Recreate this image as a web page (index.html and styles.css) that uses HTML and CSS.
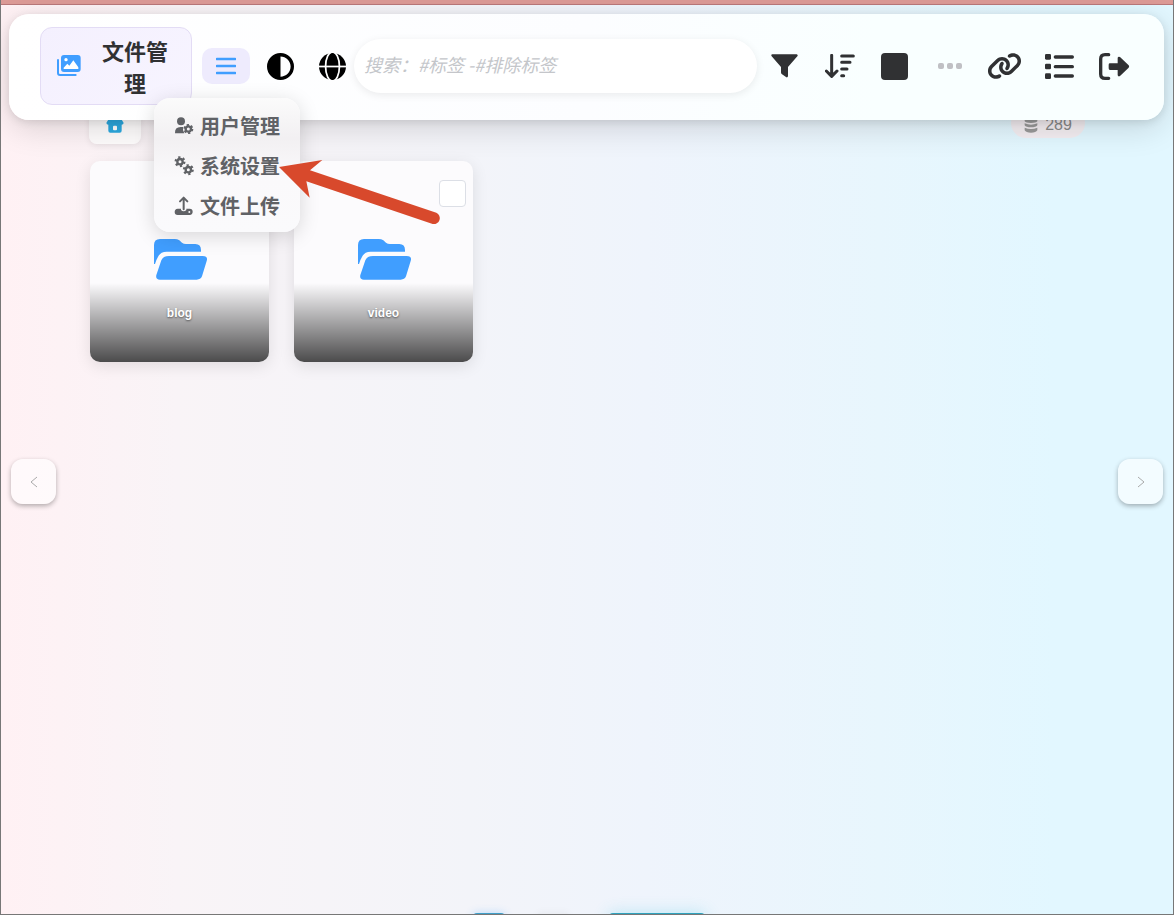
FILE: index.html
```
<!DOCTYPE html>
<html lang="zh-CN">
<head>
    <meta charset="UTF-8">
    <meta name="viewport" content="width=device-width, initial-scale=1.0">
    <title>文件管理</title>
    <link rel="stylesheet" href="styles.css">
</head>
<body>
    <div class="page">
        <header class="navbar">
            <button class="brand">
                <svg width="24" height="22" viewBox="0 0 72 66">
                    <path d="M3 15V54Q3 60 9 60H56" fill="none" stroke="#409eff" stroke-width="6" stroke-linecap="round"/>
                    <rect x="12" y="0" width="59" height="51" rx="9" fill="#409eff"/>
                    <circle cx="27" cy="14" r="5" fill="#fff"/>
                    <path d="M20 42V38L31 26L37 32L49 16L64 37V42Z" fill="#fff"/>
                </svg>
                <span class="brand-text">文件管理</span>
            </button>
            <div class="nav-left">
                <div class="menu-wrap">
                    <button class="menu-btn" aria-label="菜单">
                        <svg width="20" height="18" viewBox="0 0 20 18"><path d="M1 2H19M1 9H19M1 16H19" stroke="#409eff" stroke-width="2.6" stroke-linecap="round"/></svg>
                    </button>
                    <nav class="dropdown">
                        <a href="#">
                            <svg width="20" height="18" viewBox="0 0 60 54">
                                <circle cx="21" cy="13" r="12"/>
                                <path d="M3 49Q2 30 20 30H27Q25 40 31 49Z"/>
                                <circle cx="43" cy="36" r="8" fill="none" stroke="#606266" stroke-width="7"/>
                                <circle cx="43" cy="36" r="12" fill="none" stroke="#606266" stroke-width="6" stroke-dasharray="6.5 6.1"/>
                            </svg>
                            用户管理
                        </a>
                        <a href="#">
                            <svg width="20" height="20" viewBox="0 0 60 60">
                                <g fill="none" stroke="#606266">
                                    <circle cx="18" cy="17" r="8" stroke-width="7"/>
                                    <circle cx="18" cy="17" r="13" stroke-width="7" stroke-dasharray="6.5 7.1"/>
                                    <circle cx="43" cy="41" r="8" stroke-width="7"/>
                                    <circle cx="43" cy="41" r="13" stroke-width="7" stroke-dasharray="6.5 7.1"/>
                                </g>
                            </svg>
                            系统设置
                        </a>
                        <a href="#">
                            <svg width="20" height="20" viewBox="0 0 60 60">
                                <path d="M29 40V6M18 16L29 5L40 16" fill="none" stroke="#606266" stroke-width="6" stroke-linecap="round" stroke-linejoin="round"/>
                                <path d="M11 38H21V42Q29 50 37 42V38H47Q56 38 56 47T47 57H11Q2 57 2 48T11 38Z"/>
                                <circle cx="46" cy="48" r="3" fill="#f7f6f9"/>
                            </svg>
                            文件上传
                        </a>
                    </nav>
                </div>
                <button class="icon-btn" aria-label="主题">
                    <svg width="27" height="27" viewBox="0 0 512 512"><path d="M448 256c0-106-86-192-192-192V448c106 0 192-86 192-192zM0 256a256 256 0 1 1 512 0A256 256 0 1 1 0 256z"/></svg>
                </button>
                <button class="icon-btn" aria-label="语言">
                    <svg width="27" height="27" viewBox="0 0 78 78">
                        <circle cx="39" cy="39" r="39"/>
                        <g fill="none" stroke="#fff" stroke-width="5">
                            <ellipse cx="39" cy="39" rx="20" ry="42"/>
                            <path d="M0 39H78"/>
                        </g>
                    </svg>
                </button>
            </div>
            <input class="search" type="search" placeholder="搜索：#标签 -#排除标签" aria-label="搜索">
            <div class="tools">
                <button aria-label="筛选">
                    <svg width="27" height="24" viewBox="0 0 81 72"><path d="M4 1H77Q82 3 79 7L51 39V67Q49 72 45 69L32 60Q30 58 30 55V39L2 7Q-1 2 4 1Z"/></svg>
                </button>
                <button aria-label="排序">
                    <svg width="30" height="24" viewBox="0 0 90 72"><path d="M20 4V66M4 51L20 67L36 51M50 6H85M50 25H75M50 45H66M50 65H56" fill="none" stroke="#303133" stroke-width="9" stroke-linecap="round" stroke-linejoin="round"/></svg>
                </button>
                <button aria-label="全选">
                    <svg width="27" height="27" viewBox="0 0 27 27"><rect width="27" height="27" rx="4"/></svg>
                </button>
                <button aria-label="更多" disabled>
                    <svg width="24" height="6" viewBox="0 0 24 6" class="dim"><rect width="6" height="6" rx="2"/><rect x="9" width="6" height="6" rx="2"/><rect x="18" width="6" height="6" rx="2"/></svg>
                </button>
                <button aria-label="链接">
                    <svg width="35" height="28" viewBox="0 0 640 512"><path d="M579.8 267.7c56.5-56.5 56.5-148 0-204.5c-50-50-128.8-56.5-186.3-15.4l-1.6 1.1c-14.4 10.3-17.7 30.3-7.4 44.6s30.3 17.7 44.6 7.4l1.6-1.1c32.1-22.9 76-19.3 103.8 8.6c31.5 31.5 31.5 82.5 0 114L422.3 334.8c-31.5 31.5-82.5 31.5-114 0c-27.9-27.9-31.5-71.8-8.6-103.8l1.1-1.6c10.3-14.4 6.9-34.4-7.4-44.6s-34.4-6.9-44.6 7.4l-1.1 1.6C206.5 251.2 213 330 263 380c56.5 56.5 148 56.5 204.5 0L579.8 267.7zM60.2 244.3c-56.5 56.5-56.5 148 0 204.5c50 50 128.8 56.5 186.3 15.4l1.6-1.1c14.4-10.3 17.7-30.3 7.4-44.6s-30.3-17.7-44.6-7.4l-1.6 1.1c-32.1 22.9-76 19.3-103.8-8.6C74 372 74 321 105.5 289.5L217.7 177.2c31.5-31.5 82.5-31.5 114 0c27.9 27.9 31.5 71.8 8.6 103.9l-1.1 1.6c-10.3 14.4-6.9 34.4 7.4 44.6s34.4 6.9 44.6-7.4l1.1-1.6C433.5 260.8 427 182 377 132c-56.5-56.5-148-56.5-204.5 0L60.2 244.3z"/></svg>
                </button>
                <button aria-label="列表">
                    <svg width="29" height="25" viewBox="0 0 87 75"><rect width="18" height="17" rx="4"/><rect y="29" width="18" height="17" rx="4"/><rect y="58" width="18" height="17" rx="4"/><path d="M31 9H82M31 38H82M31 66H82" stroke="#303133" stroke-width="10" stroke-linecap="round"/></svg>
                </button>
                <button aria-label="退出">
                    <svg width="31" height="27" viewBox="0 0 93 81"><path d="M29 5H18Q5 5 5 18V63Q5 76 18 76H29" fill="none" stroke="#303133" stroke-width="10" stroke-linecap="round"/><path d="M33 31H56V14Q58 9 63 12L89 37Q92 40 89 44L63 69Q58 72 56 67V51H33Q29 51 29 46V35Q29 31 33 31Z"/></svg>
                </button>
            </div>
        </header>

        <main class="content">
            <div class="crumbs">
                <a class="home" href="#" aria-label="首页">
                    <svg width="18" height="14" viewBox="0 0 54 42"><path d="M8 0H46L53 12Q52 17 47 17V35Q47 41 41 41H13Q7 41 7 35V17Q2 17 1 12Z" fill="#2ba9e0"/><rect x="21" y="20" width="12" height="14" rx="3" fill="#fff"/></svg>
                </a>
                <span class="count">
                    <svg width="14" height="15" viewBox="0 0 42 45"><path d="M2 6Q4 0 21 0T40 6V10Q36 15 21 15T2 10ZM2 16Q21 24 40 16V22Q36 28 21 28T2 22ZM2 29Q21 37 40 29V37Q36 44 21 44T2 37Z" fill="#999"/></svg>
                    289
                </span>
            </div>
            <div class="grid">
                <div class="card">
                    <input type="checkbox" aria-label="选择 blog">
                    <svg class="folder" width="54" height="41" viewBox="0 0 162 123"><path d="M0 75V18Q0 0 18 0H62Q70 0 76 4L84 11Q89 15 96 15H124Q141 15 141 33V38H38Q20 38 13 52Q7 62 3 75ZM45 51H146Q163 51 158 66L144 112Q140 122 128 122H18Q4 122 7 108L22 64Q27 51 45 51Z"/></svg>
                    <div class="name">blog</div>
                </div>
                <div class="card">
                    <input type="checkbox" aria-label="选择 video">
                    <svg class="folder" width="54" height="41" viewBox="0 0 162 123"><path d="M0 75V18Q0 0 18 0H62Q70 0 76 4L84 11Q89 15 96 15H124Q141 15 141 33V38H38Q20 38 13 52Q7 62 3 75ZM45 51H146Q163 51 158 66L144 112Q140 122 128 122H18Q4 122 7 108L22 64Q27 51 45 51Z"/></svg>
                    <div class="name">video</div>
                </div>
            </div>
        </main>

        <button class="side prev" aria-label="上一页"><svg width="8" height="12" viewBox="0 0 8 12"><path d="M7 1L1 6L7 11"/></svg></button>
        <button class="side next" aria-label="下一页"><svg width="8" height="12" viewBox="0 0 8 12"><path d="M1 1L7 6L1 11"/></svg></button>

        <footer class="pager">
            <button class="pg current" aria-label="当前页"></button>
            <button class="pg" aria-label="末页"></button>
            <button class="pg jump" aria-label="跳转"></button>
        </footer>

        <svg class="pointer" width="162" height="68" viewBox="0 0 486 204">
            <path d="M0 51L130 30L93 61L472 188A18 18 0 0 1 461 222L82 94L92 143Z" transform="translate(0 -18)" fill="#d8492c"/>
        </svg>
    </div>
</body>
</html>
```
FILE: styles.css
```
* {
    box-sizing: border-box;
}
body {
    margin: 0;
    font-family: "Noto Sans CJK SC", "Liberation Sans", sans-serif;
    color: #303133;
}
button {
    padding: 0;
    border: none;
    background: none;
    font-family: inherit;
    color: inherit;
    cursor: pointer;
}
svg {
    display: block;
    flex-shrink: 0;
}
.page {
    position: relative;
    display: flex;
    flex-direction: column;
    height: 100vh;
    min-height: 400px;
    overflow: hidden;
    border: 1px solid #777;
    border-top: 0;
    background: linear-gradient(to right, #fff1f4, #f9f4f7 15%, #f3f4f9 40%, #eff4fc 55%, #e8f6fd 75%, #e2f7ff 90%);
}
.page::before {
    content: "";
    flex: 0 0 4px;
    background: #dc9a96;
    border-bottom: 1px solid #b97779;
}

/* 顶部导航 */
.navbar {
    position: relative;
    z-index: 10;
    display: flex;
    align-items: center;
    min-height: 106px;
    margin: 9px 9px 0 8px;
    padding: 13px 22px 15px 31px;
    border-radius: 20px;
    background: linear-gradient(to right, #fff, #fcfdff 50%, #f9ffff 75%);
    box-shadow: 0 8px 32px rgba(0, 0, 0, 0.14), 0 2px 8px rgba(0, 0, 0, 0.1);
}
.brand {
    display: flex;
    align-items: center;
    width: 152px;
    height: 78px;
    padding: 0 16px;
    border: 1px solid #e3dcf5;
    border-radius: 12px;
    background: linear-gradient(135deg, #f4f0fe, #f7f4ff);
}
.brand-text {
    flex: 1;
    padding-left: 14px;
    font-size: 22px;
    line-height: 32px;
    font-weight: 700;
}
.nav-left {
    display: flex;
    align-items: center;
    gap: 8px;
    margin-left: 10px;
}
.menu-wrap {
    position: relative;
}
.menu-btn {
    display: flex;
    align-items: center;
    justify-content: center;
    width: 48px;
    height: 36px;
    border-radius: 10px;
    background: #eeebfd;
}
.icon-btn {
    display: flex;
    justify-content: center;
    width: 44px;
}
.dropdown {
    position: absolute;
    top: 50px;
    right: -50px;
    width: 146px;
    padding: 8px 0 6px;
    border-radius: 16px;
    background: linear-gradient(#fbfbfb, #f2f0f2 30%, #faf9fb 60%, #fafafc);
    box-shadow: 0 4px 20px rgba(0, 0, 0, 0.15);
}
.dropdown a {
    display: flex;
    align-items: center;
    justify-content: center;
    gap: 6px;
    height: 40px;
    font-size: 20px;
    line-height: 40px;
    font-weight: 700;
    color: #606266;
    text-decoration: none;
}
.dropdown svg {
    fill: #606266;
}
.search {
    flex: 1;
    min-width: 0;
    height: 54px;
    padding: 0 10px 4px;
    border: none;
    border-radius: 27px;
    background: #fff;
    font-family: inherit;
    font-size: 18px;
    box-shadow: 0 2px 8px rgba(0, 0, 0, 0.08);
}
.search::placeholder {
    color: #c4c6ca;
    font-style: italic;
}
.tools {
    display: flex;
    align-items: center;
}
.tools button {
    display: flex;
    align-items: center;
    justify-content: center;
    width: 55px;
    height: 40px;
    fill: #303133;
}
.tools .dim {
    fill: #c0c0c4;
}

/* 文件区域 */
.content {
    flex: 1;
    margin-top: -12px;
    padding: 0 88px;
}
.crumbs {
    display: flex;
    align-items: flex-start;
    justify-content: space-between;
}
.home {
    display: flex;
    align-items: center;
    justify-content: center;
    width: 52px;
    height: 36px;
    border-radius: 8px;
    background: rgba(255, 255, 255, 0.7);
    box-shadow: 0 2px 6px rgba(0, 0, 0, 0.08);
}
.count {
    display: flex;
    align-items: center;
    justify-content: center;
    gap: 7px;
    width: 74px;
    height: 30px;
    padding-top: 4px;
    border-radius: 15px;
    background: #f4eef2;
    font-family: "Liberation Sans", sans-serif;
    font-size: 16px;
    color: #888;
}
.grid {
    display: flex;
    flex-wrap: wrap;
    gap: 25px;
    margin-top: 17px;
    padding-left: 1px;
}
.card {
    position: relative;
    display: flex;
    flex-direction: column;
    align-items: center;
    width: 179px;
    height: 201px;
    overflow: hidden;
    border-radius: 10px;
    background: #fcfbfd;
    box-shadow: 0 4px 16px rgba(0, 0, 0, 0.1);
}
.card input {
    position: absolute;
    top: 19px;
    right: 7px;
    width: 27px;
    height: 27px;
    margin: 0;
    appearance: none;
    border: 1px solid #dcdfe6;
    border-radius: 4px;
    background: #fff;
}
.folder {
    margin: 78px 0 3px 2px;
    fill: #409eff;
}
.name {
    flex: 1;
    width: 100%;
    padding-top: 20px;
    background: linear-gradient(rgba(0, 0, 0, 0), rgba(0, 0, 0, 0.7));
    font-family: "Liberation Sans", sans-serif;
    font-size: 12px;
    line-height: 20px;
    font-weight: 700;
    text-align: center;
    color: #fff;
    text-shadow: 0 1px 2px rgba(0, 0, 0, 0.5);
}

/* 翻页 */
.side {
    position: absolute;
    top: 459px;
    display: flex;
    align-items: center;
    justify-content: center;
    width: 45px;
    height: 45px;
    border-radius: 12px;
    background: rgba(255, 255, 255, 0.6);
    box-shadow: 0 2px 5px rgba(0, 0, 0, 0.3);
}
.side path {
    fill: none;
    stroke: #aaa;
}
.prev {
    left: 10px;
}
.next {
    right: 10px;
}
.pager {
    display: flex;
    justify-content: center;
    gap: 32px;
    height: 1px;
    padding-left: 4px;
}
.pg {
    width: 32px;
    height: 32px;
    border-radius: 4px;
    background: #eceef3;
    box-shadow: 0 0 8px rgba(0, 0, 0, 0.05);
}
.pg.current {
    background: #3f9fc8;
    box-shadow: 0 0 8px rgba(64, 158, 255, 0.3);
}
.pg.jump {
    width: 96px;
    margin-left: 8px;
    background: #2fa3bd;
    box-shadow: 0 0 16px rgba(64, 200, 230, 0.3);
}

.pointer {
    position: absolute;
    z-index: 20;
    top: 156px;
    left: 278px;
    overflow: visible;
    pointer-events: none;
}
```
